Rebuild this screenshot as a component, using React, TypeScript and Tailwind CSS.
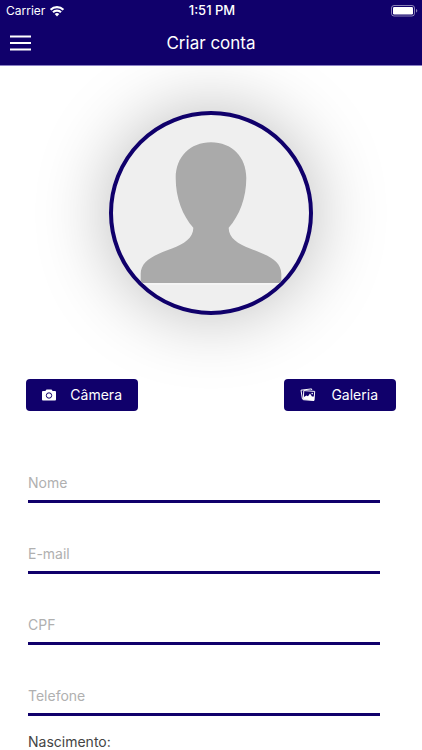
const fields = [
  { id: "nome", label: "Nome", type: "text" },
  { id: "email", label: "E-mail", type: "email" },
  { id: "cpf", label: "CPF", type: "text" },
  { id: "telefone", label: "Telefone", type: "tel" },
]

function WifiIcon() {
  return (
    <svg viewBox="0 0 16 12" className="w-4 h-3" fill="none" stroke="white" strokeWidth="2.2">
      <path d="M1.6 4.7a9.2 9.2 0 0 1 12.8 0" />
      <path d="M4 7.3a5.7 5.7 0 0 1 8 0" />
      <path d="M8 11.4 5.7 9a3.3 3.3 0 0 1 4.6 0Z" fill="white" stroke="none" />
    </svg>
  )
}

function BatteryIcon() {
  return (
    <svg viewBox="0 0 27 12" className="w-[27px] h-3" fill="none">
      <rect x="0.5" y="0.5" width="23" height="10.5" rx="2.5" stroke="white" strokeOpacity="0.5" />
      <rect x="2" y="2" width="20" height="7.5" rx="1.2" fill="white" />
      <path d="M25 4v3.6c.8-.3 1.3-1 1.3-1.8S25.8 4.3 25 4Z" fill="white" fillOpacity="0.5" />
    </svg>
  )
}

function CameraIcon() {
  return (
    <svg viewBox="0 0 14 12" className="w-3.5 h-3">
      <path d="M.9 2H3.3L4.5.5H9.5L10.7 2H13.1Q14 2 14 2.9V10.6Q14 11.5 13.1 11.5H.9Q0 11.5 0 10.6V2.9Q0 2 .9 2Z" fill="white" />
      <circle cx="7" cy="6.5" r="2.7" fill="white" stroke="#10006b" strokeWidth="1" />
    </svg>
  )
}

function GalleryIcon() {
  return (
    <svg viewBox="0 0 16 14" className="w-4 h-3.5" fill="none" stroke="white">
      <path d="M3.2 11 2.4 10.8 1 2.2 11.5.9 11.8 2" strokeWidth="1" />
      <path d="M3.8 2.6 14.7 3.4 14 12.5 3.2 11.7Z" strokeWidth="1" />
      <path d="M3.4 11.6 3.6 9.2 6.4 7.6 8 8.2 10 5.6 12 8.4 14.2 8.6 14 12.4Z" fill="white" stroke="none" />
      <circle cx="12.2" cy="5.6" r="0.8" fill="white" stroke="none" />
    </svg>
  )
}

function Avatar() {
  return (
    <div className="w-[204px] h-[204px] rounded-full border-4 border-[#10006b] bg-[#efefef] overflow-hidden shadow-[0_0_75px_rgba(0,0,0,0.28)]">
      <svg viewBox="4 4 196 196" className="w-full h-full" role="img" aria-label="Foto">
        <path
          d="M102 31.3C81 31.3 66.7 46 66.7 67C66.7 87 73.5 104.5 84.3 116.7C84.5 127 75 133 63 137.5C47 143.5 31.7 149 31.7 163V172.3H172.3V163C172.3 149 157 143.5 141 137.5C129 133 119.5 127 119.7 116.7C130.5 104.5 137.3 87 137.3 67C137.3 46 123 31.3 102 31.3Z"
          fill="#aaaaaa"
        />
        <path d="M30 172.8H174" stroke="white" strokeWidth="1" />
      </svg>
    </div>
  )
}

export default function App() {
  return (
    <div className="min-h-screen bg-white font-['Inter','Liberation_Sans',sans-serif]">
      {/* Header */}
      <header className="relative z-10 bg-[#10006b] text-white border-b border-[#8a80c4]">
        <div className="grid grid-cols-3 items-center h-[21px] pl-1.5 pr-1 text-xs">
          <div className="flex items-center gap-1">
            <span>Carrier</span>
            <WifiIcon />
          </div>
          <span className="text-center text-[13px] font-medium">1:51 PM</span>
          <div className="flex justify-end">
            <BatteryIcon />
          </div>
        </div>
        <div className="grid grid-cols-[1fr_auto_1fr] items-center h-11 px-2.5">
          <button type="button" aria-label="Menu" className="w-[21px]">
            <svg viewBox="0 0 21 16" className="w-[21px] h-4" stroke="white" strokeWidth="2">
              <path d="M0 1.5H21M0 8H21M0 14.5H21" />
            </svg>
          </button>
          <h1 className="text-[17px] leading-6">Criar conta</h1>
        </div>
      </header>

      <main className="pt-[45px]">
        <div className="flex justify-center">
          <Avatar />
        </div>

        {/* Photo source */}
        <div className="flex justify-between px-[26px] mt-16">
          <button type="button" className="flex items-center justify-between w-28 h-8 rounded bg-[#10006b] text-white text-sm px-4">
            <CameraIcon />
            Câmera
          </button>
          <button type="button" className="flex items-center justify-between w-28 h-8 rounded bg-[#10006b] text-white text-sm pl-4 pr-[18px]">
            <GalleryIcon />
            Galeria
          </button>
        </div>

        {/* Form */}
        <form className="pl-7 pr-[42px] mt-[53px]">
          <div className="flex flex-col gap-8">
            {fields.map((field) => (
              <input
                key={field.id}
                id={field.id}
                type={field.type}
                aria-label={field.label}
                placeholder={field.label}
                className="w-full h-[39px] border-b-3 border-[#10006b] text-sm text-[#444444] placeholder:text-[#b0b0b0] outline-none"
              />
            ))}
          </div>
          <p className="mt-[18px] text-sm leading-4 text-[#444444]">Nascimento:</p>
        </form>
      </main>
    </div>
  )
}
